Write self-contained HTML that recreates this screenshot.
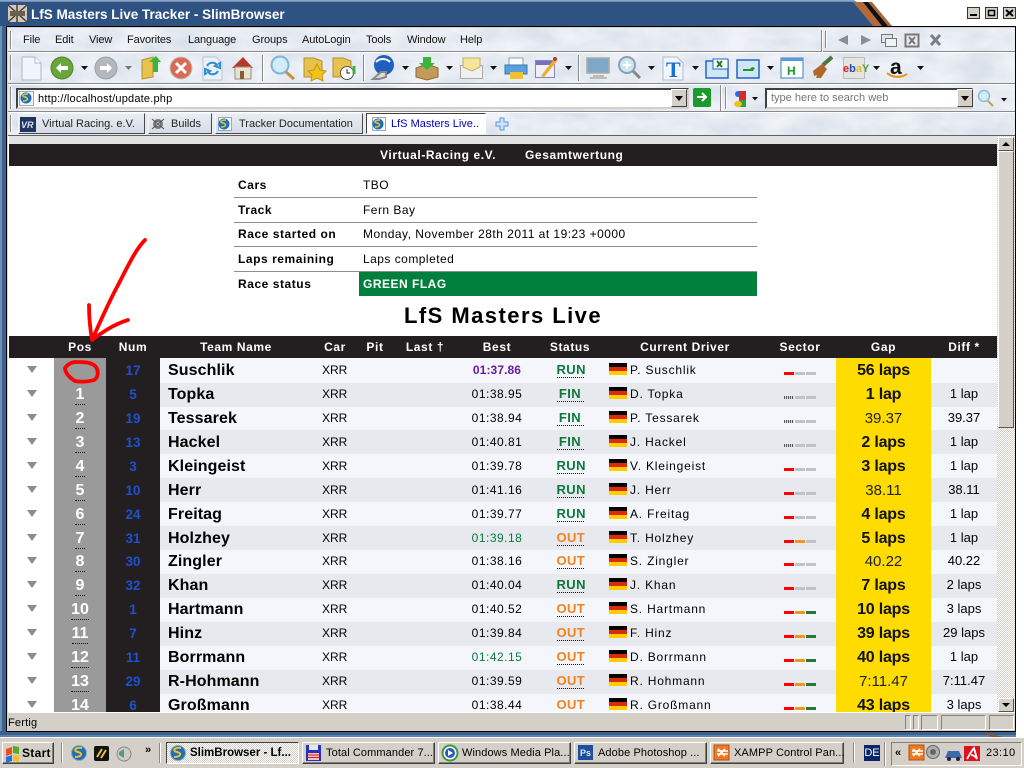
<!DOCTYPE html>
<html><head><meta charset="utf-8"><title>LfS Masters Live Tracker - SlimBrowser</title>
<style>
html,body{margin:0;padding:0;background:#fff}
body{position:relative;width:1024px;height:768px;overflow:hidden;font-family:"Liberation Sans",Arial,sans-serif;font-size:11px;color:#000}
div,span,i,b{position:absolute;white-space:nowrap;box-sizing:border-box}
.m{top:33px;letter-spacing:-.1px;line-height:14px;color:#111}
.ln{height:1px;background:#8e8e8e;left:234px;width:523px}
.il{left:238px;font:bold 12px "Liberation Sans",sans-serif;letter-spacing:.55px;line-height:16px}
.iv{left:363px;font:12px "Liberation Sans",sans-serif;letter-spacing:.47px;line-height:16px}
.h{top:336px;height:22px;line-height:23px;font:bold 12px/23px "Liberation Sans",sans-serif;letter-spacing:.6px;color:#fff;text-align:center}
.s{background:#e8e9ee;left:160px;width:676px}
.s2{background:#e8e9ee;left:931px;width:66px}
.r{left:0;width:997px;height:24px;line-height:24px}
.a{left:27px;top:8px;width:0;height:0;border:5px solid transparent;border-top:7px solid #8c8c8c;border-bottom:0}
.p{left:70px;top:1px;width:20px;text-align:center;color:#fff;font-size:16px;font-weight:bold;line-height:24px}
.p u{text-decoration:none;border-bottom:1px dotted #111;display:inline-block;line-height:17px;padding:0 0 1px 0;min-width:10px}
.n{left:106px;top:1px;width:54px;text-align:center;color:#1f50cf;font-weight:bold;font-size:13.5px}
.t{left:168px;top:1px;font-weight:bold;font-size:16px;letter-spacing:.1px}
.c{left:322px;font-size:12px}
.b{left:447px;width:100px;text-align:center;font-size:12px;letter-spacing:.5px}
.st{left:545px;width:50px;text-align:center;font-weight:bold;font-size:13px;letter-spacing:.4px}
.st u{text-decoration:none;border-bottom:1px dotted #111;display:inline-block;line-height:15px;width:27px}
.R{color:#0b7a3b}.O{color:#f5821f}
.f{left:609px;top:5px;width:18px;height:12px;background:linear-gradient(#000 0 33%,#dd2a0c 33% 66%,#fc0 66%)}
.d{left:630px;font-size:12px;letter-spacing:.8px}
.x1,.x2,.x3{top:14px;height:3px;width:10px;background:#c2c2c2}
.x1{left:784px}.x2{left:795px}.x3{left:806px}
.red{background:#f00}.org{background:#f39420}.grn{background:#1f7a3c}
.dot{background:repeating-linear-gradient(90deg,#555 0 1px,#ddd 1px 2px)}
.g{left:836px;top:1px;width:95px;text-align:center;font-size:15px;color:#222}
.g b{position:static;font-size:16px;color:#111;letter-spacing:-.2px}
.df{left:931px;width:66px;text-align:center;font-size:13px}
.w{height:22px;top:742px;background:#d4d0c8;border:1px solid;border-color:#fff #404040 #404040 #fff;box-shadow:inset -1px -1px 0 #808080}
.wt{top:747px;line-height:13px;font-size:11px;letter-spacing:.1px}
.tab{top:113px;height:21px;background:linear-gradient(#e8edf3,#d5dce6);border:1px solid;border-color:#f4f6fa #4a4a4a #4a4a4a #f4f6fa}
.tt{top:117px;font-size:11px;line-height:14px;color:#222}
.sepv{width:2px;background:linear-gradient(90deg,#8a8a8a 50%,#fff 50%)}
</style></head><body>

<!-- window frame -->
<div style="left:0;top:0;width:1024px;height:3px;background:linear-gradient(#9ab0cc,#4a6d9c);"></div>
<div style="left:0;top:2px;width:1024px;height:24px;background:#2e5281"></div>
<svg style="position:absolute;left:0;top:0" width="1024" height="768">
<defs>
<filter id="tx" x="0" y="0" width="100%" height="100%" color-interpolation-filters="sRGB"><feTurbulence type="fractalNoise" baseFrequency=".025 .05" numOctaves="3" seed="4"/><feColorMatrix values="0 0 0 0 .94  0 0 0 0 .95  0 0 0 0 .97  1.6 0 0 -.4 0"/><feComposite in2="SourceGraphic" operator="in"/><feMerge><feMergeNode in="SourceGraphic"/><feMergeNode/></feMerge></filter>
</defs>
<polygon points="854,0 1024,0 1024,27 892,27" fill="#fff"/>
<polygon points="853,2 866,2 888,26 873,26" fill="#b06a3b"/>
<polygon points="864,2 872,2 892,26 884,26" fill="#a8683c"/>
<polygon points="863,2 868,2 888,26 882,26" fill="#111"/>
<rect x="0" y="26" width="7" height="711" fill="#3b628f"/>
<rect x="0" y="26" width="2" height="711" fill="#6f8fb5"/>
<rect x="0" y="731" width="1016" height="6" fill="#3b628f"/>
<rect x="0" y="735" width="1016" height="2" fill="#5d83ad"/>
<polygon points="980,731 1003,737 992,737" fill="#8c5430"/>
<rect x="6.500" y="26.500" width="1009" height="705" fill="#d4d0c8" stroke="#000"/>
<rect x="8" y="28" width="1007" height="108" fill="#d9e1ec" filter="url(#tx)"/>
</svg>

<!-- toolbar dividers -->
<div style="left:8px;top:51px;width:1007px;height:1px;background:#8a8a8a"></div><div style="left:8px;top:52px;width:1007px;height:1px;background:#fff"></div>
<div style="left:8px;top:83px;width:1007px;height:1px;background:#8a8a8a"></div><div style="left:8px;top:84px;width:1007px;height:1px;background:#fff"></div>
<div style="left:8px;top:111px;width:1007px;height:1px;background:#8a8a8a"></div><div style="left:8px;top:112px;width:1007px;height:1px;background:#fff"></div>
<div style="left:8px;top:135px;width:1007px;height:1px;background:#606060"></div>
<div class="sepv" style="left:10px;top:31px;height:18px"></div>
<div class="sepv" style="left:10px;top:55px;height:25px"></div>
<div class="sepv" style="left:10px;top:87px;height:22px"></div>
<div class="sepv" style="left:10px;top:115px;height:17px"></div>
<div class="sepv" style="left:821px;top:30px;height:22px"></div>
<div class="sepv" style="left:825px;top:31px;height:17px"></div>
<div class="sepv" style="left:262px;top:55px;height:26px"></div>
<div class="sepv" style="left:363px;top:55px;height:26px"></div>
<div class="sepv" style="left:578px;top:55px;height:26px"></div>
<div class="sepv" style="left:720px;top:85px;height:26px"></div>
<div class="sepv" style="left:725px;top:87px;height:22px"></div>

<!-- title -->
<div style="left:31px;top:6px;font:bold 13.5px/17px 'Liberation Sans',sans-serif;color:#fff">LfS Masters Live Tracker - SlimBrowser</div>

<!-- menu -->
<div class="m" style="left:23px">File</div><div class="m" style="left:55px">Edit</div><div class="m" style="left:89px">View</div>
<div class="m" style="left:127px">Favorites</div><div class="m" style="left:188px">Language</div><div class="m" style="left:252px">Groups</div>
<div class="m" style="left:302px">AutoLogin</div><div class="m" style="left:366px">Tools</div><div class="m" style="left:407px">Window</div><div class="m" style="left:460px">Help</div>

<!-- address row -->
<div style="left:16px;top:88px;width:673px;height:21px;background:#fff;border:2px solid;border-color:#404040 #d4d0c8 #d4d0c8 #404040"></div>
<div style="left:38px;top:92px;font-size:11px;letter-spacing:.2px;line-height:14px">http://localhost/update.php</div>
<div style="left:671px;top:89px;width:16px;height:18px;background:#d4d0c8;border:1px solid;border-color:#fff #404040 #404040 #fff"></div>
<div style="left:693px;top:88px;width:18px;height:19px;background:#1d9a2e;border-radius:2px"></div>
<div style="left:765px;top:88px;width:208px;height:21px;background:#fff;border:2px solid;border-color:#404040 #d4d0c8 #d4d0c8 #404040"></div>
<div style="left:771px;top:91px;font-size:11px;line-height:14px;color:#777">type here to search web</div>
<div style="left:957px;top:89px;width:16px;height:18px;background:#d4d0c8;border:1px solid;border-color:#fff #404040 #404040 #fff"></div>

<!-- tabs -->
<div class="tab" style="left:18px;width:127px"></div><div class="tt" style="left:42px">Virtual Racing. e.V.</div>
<div class="tab" style="left:148px;width:64px"></div><div class="tt" style="left:171px">Builds</div>
<div class="tab" style="left:215px;width:148px"></div><div class="tt" style="left:239px">Tracker Documentation</div>
<div class="tab" style="left:366px;width:120px;background:#fff;border-color:#404040 #fff #fff #404040"></div><div class="tt" style="left:391px;color:#0000c0">LfS Masters Live..</div>

<!-- content -->
<div style="left:8px;top:136px;width:989px;height:576px;background:#fff"></div>
<div style="left:9px;top:136px;width:988px;height:8px;background:#e2e2e2"></div>
<div style="left:9px;top:144px;width:988px;height:22px;background:#231f20"></div>
<div style="left:380px;top:147px;font:bold 12px/16px 'Liberation Sans',sans-serif;letter-spacing:.6px;color:#fff">Virtual-Racing e.V.</div>
<div style="left:525px;top:147px;font:bold 12px/16px 'Liberation Sans',sans-serif;letter-spacing:.6px;color:#fff">Gesamtwertung</div>

<div class="il" style="top:177px">Cars</div><div class="iv" style="top:177px">TBO</div><div class="ln" style="top:197px"></div>
<div class="il" style="top:202px">Track</div><div class="iv" style="top:202px">Fern Bay</div><div class="ln" style="top:222px"></div>
<div class="il" style="top:226px">Race started on</div><div class="iv" style="top:226px">Monday, November 28th 2011 at 19:23 +0000</div><div class="ln" style="top:246px"></div>
<div class="il" style="top:251px">Laps remaining</div><div class="iv" style="top:251px">Laps completed</div><div class="ln" style="top:271px"></div>
<div style="left:359px;top:272px;width:398px;height:24px;background:#00803c"></div>
<div class="il" style="top:276px">Race status</div>
<div style="left:363px;top:276px;font:bold 12px/16px 'Liberation Sans',sans-serif;letter-spacing:.5px;color:#fff">GREEN FLAG</div>
<div style="left:404px;top:302px;font:bold 22px/28px 'Liberation Sans',sans-serif;letter-spacing:1.45px;color:#000">LfS Masters Live</div>

<!-- table head -->
<div style="left:9px;top:336px;width:988px;height:22px;background:#231f20"></div>
<div class="h" style="left:54px;width:52px">Pos</div><div class="h" style="left:106px;width:54px">Num</div>
<div class="h" style="left:160px;width:152px">Team Name</div><div class="h" style="left:312px;width:46px">Car</div>
<div class="h" style="left:360px;width:30px">Pit</div><div class="h" style="left:395px;width:60px">Last †</div>
<div class="h" style="left:467px;width:60px">Best</div><div class="h" style="left:540px;width:60px">Status</div>
<div class="h" style="left:625px;width:120px">Current Driver</div><div class="h" style="left:770px;width:60px">Sector</div>
<div class="h" style="left:836px;width:95px">Gap</div><div class="h" style="left:931px;width:66px">Diff *</div>

<!-- table body -->
<div style="left:0;top:358px;width:997px;height:354px;overflow:hidden">
<div style="left:54px;top:0;width:52px;height:354px;background:#9a9a9a"></div>
<div style="left:106px;top:0;width:54px;height:354px;background:#231f20"></div>
<div style="left:160px;top:0;width:676px;height:354px;background:#f4f6fb"></div>
<div style="left:931px;top:0;width:66px;height:354px;background:#f4f6fb"></div>
<div style="left:836px;top:0;width:95px;height:354px;background:#ffdc00"></div>
<div class="s" style="top:25px;height:24px"></div><div class="s2" style="top:25px;height:24px"></div>
<div class="s" style="top:72px;height:24px"></div><div class="s2" style="top:72px;height:24px"></div>
<div class="s" style="top:120px;height:24px"></div><div class="s2" style="top:120px;height:24px"></div>
<div class="s" style="top:168px;height:24px"></div><div class="s2" style="top:168px;height:24px"></div>
<div class="s" style="top:216px;height:24px"></div><div class="s2" style="top:216px;height:24px"></div>
<div class="s" style="top:264px;height:24px"></div><div class="s2" style="top:264px;height:24px"></div>
<div class="s" style="top:312px;height:24px"></div><div class="s2" style="top:312px;height:24px"></div>

<div class="r" style="top:0"><i class="a"></i><span class="n">17</span><span class="t">Suschlik</span><span class="c">XRR</span><span class="b" style="color:#6a1b9a;font-weight:bold;letter-spacing:.1px">01:37.86</span><span class="st R"><u>RUN</u></span><i class="f"></i><span class="d">P. Suschlik</span><i class="x1 red"></i><i class="x2"></i><i class="x3"></i><span class="g"><b>56 laps</b></span></div>
<div class="r" style="top:24px"><i class="a"></i><span class="p"><u>1</u></span><span class="n">5</span><span class="t">Topka</span><span class="c">XRR</span><span class="b">01:38.95</span><span class="st R"><u>FIN</u></span><i class="f"></i><span class="d">D. Topka</span><i class="x1 dot"></i><i class="x2"></i><i class="x3"></i><span class="g"><b>1 lap</b></span><span class="df">1 lap</span></div>
<div class="r" style="top:48px"><i class="a"></i><span class="p"><u>2</u></span><span class="n">19</span><span class="t">Tessarek</span><span class="c">XRR</span><span class="b">01:38.94</span><span class="st R"><u>FIN</u></span><i class="f"></i><span class="d">P. Tessarek</span><i class="x1 dot"></i><i class="x2"></i><i class="x3"></i><span class="g">39.37</span><span class="df">39.37</span></div>
<div class="r" style="top:72px"><i class="a"></i><span class="p"><u>3</u></span><span class="n">13</span><span class="t">Hackel</span><span class="c">XRR</span><span class="b">01:40.81</span><span class="st R"><u>FIN</u></span><i class="f"></i><span class="d">J. Hackel</span><i class="x1 dot"></i><i class="x2"></i><i class="x3"></i><span class="g"><b>2 laps</b></span><span class="df">1 lap</span></div>
<div class="r" style="top:96px"><i class="a"></i><span class="p"><u>4</u></span><span class="n">3</span><span class="t">Kleingeist</span><span class="c">XRR</span><span class="b">01:39.78</span><span class="st R"><u>RUN</u></span><i class="f"></i><span class="d">V. Kleingeist</span><i class="x1 red"></i><i class="x2"></i><i class="x3"></i><span class="g"><b>3 laps</b></span><span class="df">1 lap</span></div>
<div class="r" style="top:120px"><i class="a"></i><span class="p"><u>5</u></span><span class="n">10</span><span class="t">Herr</span><span class="c">XRR</span><span class="b">01:41.16</span><span class="st R"><u>RUN</u></span><i class="f"></i><span class="d">J. Herr</span><i class="x1 red"></i><i class="x2"></i><i class="x3"></i><span class="g">38.11</span><span class="df">38.11</span></div>
<div class="r" style="top:144px"><i class="a"></i><span class="p"><u>6</u></span><span class="n">24</span><span class="t">Freitag</span><span class="c">XRR</span><span class="b">01:39.77</span><span class="st R"><u>RUN</u></span><i class="f"></i><span class="d">A. Freitag</span><i class="x1 red"></i><i class="x2"></i><i class="x3"></i><span class="g"><b>4 laps</b></span><span class="df">1 lap</span></div>
<div class="r" style="top:168px"><i class="a"></i><span class="p"><u>7</u></span><span class="n">31</span><span class="t">Holzhey</span><span class="c">XRR</span><span class="b" style="color:#0b7a3b">01:39.18</span><span class="st O"><u>OUT</u></span><i class="f"></i><span class="d">T. Holzhey</span><i class="x1 red"></i><i class="x2 org"></i><i class="x3"></i><span class="g"><b>5 laps</b></span><span class="df">1 lap</span></div>
<div class="r" style="top:191px"><i class="a"></i><span class="p"><u>8</u></span><span class="n">30</span><span class="t">Zingler</span><span class="c">XRR</span><span class="b">01:38.16</span><span class="st O"><u>OUT</u></span><i class="f"></i><span class="d">S. Zingler</span><i class="x1 red"></i><i class="x2"></i><i class="x3"></i><span class="g">40.22</span><span class="df">40.22</span></div>
<div class="r" style="top:215px"><i class="a"></i><span class="p"><u>9</u></span><span class="n">32</span><span class="t">Khan</span><span class="c">XRR</span><span class="b">01:40.04</span><span class="st R"><u>RUN</u></span><i class="f"></i><span class="d">J. Khan</span><i class="x1 red"></i><i class="x2"></i><i class="x3"></i><span class="g"><b>7 laps</b></span><span class="df">2 laps</span></div>
<div class="r" style="top:239px"><i class="a"></i><span class="p"><u>10</u></span><span class="n">1</span><span class="t">Hartmann</span><span class="c">XRR</span><span class="b">01:40.52</span><span class="st O"><u>OUT</u></span><i class="f"></i><span class="d">S. Hartmann</span><i class="x1 red"></i><i class="x2 org"></i><i class="x3 grn"></i><span class="g"><b>10 laps</b></span><span class="df">3 laps</span></div>
<div class="r" style="top:263px"><i class="a"></i><span class="p"><u>11</u></span><span class="n">7</span><span class="t">Hinz</span><span class="c">XRR</span><span class="b">01:39.84</span><span class="st O"><u>OUT</u></span><i class="f"></i><span class="d">F. Hinz</span><i class="x1 red"></i><i class="x2 org"></i><i class="x3 grn"></i><span class="g"><b>39 laps</b></span><span class="df">29 laps</span></div>
<div class="r" style="top:287px"><i class="a"></i><span class="p"><u>12</u></span><span class="n">11</span><span class="t">Borrmann</span><span class="c">XRR</span><span class="b" style="color:#0b7a3b">01:42.15</span><span class="st O"><u>OUT</u></span><i class="f"></i><span class="d">D. Borrmann</span><i class="x1 red"></i><i class="x2 org"></i><i class="x3 grn"></i><span class="g"><b>40 laps</b></span><span class="df">1 lap</span></div>
<div class="r" style="top:311px"><i class="a"></i><span class="p"><u>13</u></span><span class="n">29</span><span class="t">R-Hohmann</span><span class="c">XRR</span><span class="b">01:39.59</span><span class="st O"><u>OUT</u></span><i class="f"></i><span class="d">R. Hohmann</span><i class="x1 red"></i><i class="x2 org"></i><i class="x3 grn"></i><span class="g">7:11.47</span><span class="df">7:11.47</span></div>
<div class="r" style="top:335px"><i class="a"></i><span class="p"><u>14</u></span><span class="n">6</span><span class="t">Großmann</span><span class="c">XRR</span><span class="b">01:38.44</span><span class="st O"><u>OUT</u></span><i class="f"></i><span class="d">R. Großmann</span><i class="x1 red"></i><i class="x2 org"></i><i class="x3 grn"></i><span class="g"><b>43 laps</b></span><span class="df">3 laps</span></div>
</div>

<!-- scrollbar -->
<div style="left:997px;top:136px;width:18px;height:576px;background:repeating-conic-gradient(#fff 0 25%,#d4d0c8 0 50%) 0 0/2px 2px"></div>
<div style="left:998px;top:137px;width:16px;height:14px;background:#d4d0c8;border:1px solid;border-color:#fff #555 #555 #fff"></div>
<div style="left:998px;top:151px;width:16px;height:277px;background:#d4d0c8;border:1px solid;border-color:#fff #555 #555 #fff"></div>
<div style="left:998px;top:698px;width:16px;height:14px;background:#d4d0c8;border:1px solid;border-color:#fff #555 #555 #fff"></div>

<!-- status bar -->
<div style="left:8px;top:712px;width:1007px;height:19px;background:#d4d0c8;border-top:1px solid #fff"></div>
<div style="left:8px;top:716px;font-size:11px;line-height:14px;letter-spacing:.2px">Fertig</div>
<div style="left:905px;top:715px;width:6px;height:15px;border:1px solid;border-color:#808080 #fff #fff #808080"></div>
<div style="left:913px;top:715px;width:6px;height:15px;border:1px solid;border-color:#808080 #fff #fff #808080"></div>
<div style="left:921px;top:715px;width:17px;height:15px;border:1px solid;border-color:#808080 #fff #fff #808080"></div>
<div style="left:941px;top:715px;width:45px;height:15px;border:1px solid;border-color:#808080 #fff #fff #808080"></div>
<div style="left:989px;top:715px;width:25px;height:15px;border:1px solid;border-color:#808080 #fff #fff #808080"></div>

<!-- taskbar -->
<div style="left:0;top:737px;width:1024px;height:31px;background:#d4d0c8;border-top:1px solid #fff"></div>
<div class="w" style="left:2px;width:52px"></div><div class="wt" style="left:22px;font-weight:bold;font-size:12px;letter-spacing:.3px">Start</div>
<div class="sepv" style="left:61px;top:743px;height:20px"></div>
<div style="left:145px;top:744px;font:bold 11px/13px 'Liberation Sans',sans-serif">»</div>
<div class="sepv" style="left:159px;top:743px;height:20px"></div>
<div class="w" style="left:166px;width:133px;border-color:#404040 #fff #fff #404040;box-shadow:none;background:repeating-conic-gradient(#fff 0 25%,#d4d0c8 0 50%) 0 0/2px 2px"></div>
<div class="wt" style="left:190px;font-weight:bold;letter-spacing:0;font-size:11.5px">SlimBrowser - Lf...</div>
<div class="w" style="left:302px;width:133px"></div><div class="wt" style="left:326px">Total Commander 7...</div>
<div class="w" style="left:438px;width:133px"></div><div class="wt" style="left:462px">Windows Media Pla...</div>
<div class="w" style="left:574px;width:133px"></div><div class="wt" style="left:598px">Adobe Photoshop ...</div>
<div class="w" style="left:710px;width:134px"></div><div class="wt" style="left:734px">XAMPP Control Pan...</div>
<div class="sepv" style="left:853px;top:743px;height:20px"></div>
<div style="left:864px;top:745px;width:16px;height:16px;background:#0a246a;color:#fff;font-size:11px;line-height:16px;text-align:center">DE</div>
<div class="sepv" style="left:884px;top:742px;height:24px"></div>
<div style="left:891px;top:742px;width:131px;height:24px;border:1px solid;border-color:#808080 #fff #fff #808080"></div>
<div style="left:895px;top:746px;font:bold 11px/14px 'Liberation Sans',sans-serif">«</div>
<div style="left:986px;top:746px;font-size:11px;letter-spacing:.4px;line-height:14px">23:10</div>

<!-- icons overlay -->
<svg style="position:absolute;left:0;top:0" width="1024" height="768" fill="none">
<!-- window buttons -->
<g stroke-width="1"><rect x="967.500" y="7.500" width="12" height="11" fill="#d4d0c8" stroke="#333"/><rect x="985.500" y="7.500" width="12" height="11" fill="#d4d0c8" stroke="#333"/><rect x="1003.500" y="7.500" width="12" height="11" fill="#d4d0c8" stroke="#333"/></g>
<rect x="970" y="14" width="7" height="2" fill="#000"/><rect x="988.500" y="10.500" width="6" height="5" stroke="#000" stroke-width="1.500"/><path d="M1006 10l7 6M1013 10l-7 6" stroke="#000" stroke-width="2"/>
<!-- app icon -->
<rect x="8" y="5" width="19" height="17" fill="#cfc9bd"/><path d="M8 5l19 17M27 5L8 22M17 4v19" stroke="#4a4030" stroke-width="1.500"/><rect x="10" y="11" width="15" height="5" fill="#6b5f4e"/>
<!-- menu right icons -->
<path d="M848 35v10l-10-5z" fill="#8a8d92"/><path d="M861 35v10l10-5z" fill="#8a8d92"/>
<rect x="881.500" y="34.500" width="11" height="8" stroke="#777" fill="#dde4ee"/><rect x="885.500" y="38.500" width="11" height="8" stroke="#777" fill="#eef2f7"/>
<rect x="905.500" y="34.500" width="13" height="12" stroke="#777" stroke-width="2"/><path d="M909 37l6 7M915 37l-6 7" stroke="#777" stroke-width="2"/><path d="M931 35l9 10M940 35l-9 10" stroke="#7b7f84" stroke-width="3"/>
<!-- new doc -->
<path d="M22 57h13l6 6v17H22z" fill="#f0f5fb" stroke="#a9b9c9"/><path d="M35 57v6h6" stroke="#a9b9c9" fill="#fff"/>
<!-- back / fwd -->
<circle cx="62" cy="68" r="11" fill="#6aa63c" stroke="#4e8528"/><path d="M56 68l5-5v3h7v4h-7v3z" fill="#fff"/><path d="M81 66h7l-3.500 4z" fill="#111"/>
<circle cx="106" cy="68" r="11" fill="#b4b8bc" stroke="#9ca0a4"/><path d="M112 68l-5-5v3h-7v4h7v3z" fill="#fff"/><path d="M125 66h7l-3.500 4z" fill="#777"/>
<!-- up folder -->
<path d="M142 60l11-3v20l-11 2z" fill="#e8c24e" stroke="#b59030"/><path d="M153 62l-4 0 7-6 5 6h-3v10h-5z" fill="#3bb43a"/>
<!-- stop -->
<circle cx="181" cy="68" r="11" fill="#d96a54" stroke="#c2c2c2"/><path d="M176 63l10 10M186 63l-10 10" stroke="#fff" stroke-width="3"/>
<!-- refresh -->
<path d="M203 57h13l6 6v17h-19z" fill="#eaf1f8" stroke="#b8c6d4"/><path d="M207 66a6 6 0 0 1 10-1l-2 1 5 2 0-5-2 1M218 71a6 6 0 0 1-10 1l2-1-5-2 0 5 2-1" stroke="#2f8fd0" stroke-width="2"/>
<!-- home -->
<path d="M232 68l11-11 10 11" fill="#b5382a"/><path d="M235 67h16v12h-16z" fill="#e8e2d4" stroke="#9a8f7a"/><rect x="240" y="71" width="4" height="8" fill="#8a5a30"/>
<!-- magnify -->
<circle cx="280" cy="65" r="8.500" fill="#d3ecfa" stroke="#7eb5d6" stroke-width="2"/><path d="M286 72l8 7" stroke="#c8923c" stroke-width="3"/>
<!-- favorites -->
<path d="M304 58h10l8 3v16h-18z" fill="#e8c24e" stroke="#b59030"/><path d="M317 64l3 6 6 1-4 4 1 6-6-3-6 3 1-6-4-4 6-1z" fill="#f3c318" stroke="#c3931a"/>
<!-- history -->
<path d="M333 58h10l8 3v16h-18z" fill="#e8c24e" stroke="#b59030"/><circle cx="347" cy="73" r="6.500" fill="#fff" stroke="#555"/><path d="M347 69v4h3" stroke="#222"/><path d="M354 66v8" stroke="#3bb43a" stroke-width="3"/>
<!-- globe -->
<circle cx="384" cy="65" r="10" fill="#1f5fc0"/><path d="M376 62c4-4 10-4 14 0" stroke="#fff" stroke-width="2"/><path d="M373 79l8-7h5v5l-7 2z" stroke="#888" stroke-width="2" fill="#ddd"/><path d="M402 66h7l-3.500 4z" fill="#111"/>
<!-- download -->
<path d="M416 68l11-4 11 4v9l-11 3-11-3z" fill="#c49a5c" stroke="#8a6a30"/><path d="M423 57h8v6h4l-8 7-8-7h4z" fill="#3bb43a"/><path d="M446 66h7l-3.500 4z" fill="#111"/>
<!-- mail -->
<rect x="460.500" y="65.500" width="22" height="13" fill="#eef0f2" stroke="#aaa"/><path d="M463 58h17v9l-8 4-9-4z" fill="#f6e59a" stroke="#c4b060"/><path d="M490 66h7l-3.500 4z" fill="#111"/>
<!-- printer -->
<rect x="509" y="58" width="14" height="8" fill="#fff" stroke="#8aa"/><rect x="505" y="65" width="22" height="9" fill="#5aa0dc" stroke="#3a78b0"/><rect x="510" y="72" width="13" height="7" fill="#f4c030"/>
<!-- edit -->
<rect x="535.500" y="60.500" width="19" height="17" fill="#eef0f8" stroke="#8888b0"/><rect x="536" y="61" width="18" height="4" fill="#7a6cc0"/><path d="M541 76l13-17 3 2-13 16z" fill="#e8b020"/><circle cx="555" cy="59" r="2" fill="#c03030"/><path d="M565 66h7l-3.500 4z" fill="#111"/>
<!-- monitor -->
<rect x="587" y="58" width="22" height="15" fill="#7ea7c8" stroke="#aaa" stroke-width="1.500"/><path d="M593 76h11M590 78h17" stroke="#bbb" stroke-width="2"/>
<!-- zoom -->
<circle cx="627" cy="65" r="8" fill="#cfe4f4" stroke="#8aa0b0" stroke-width="2"/><path d="M623 65h8M627 61v8" stroke="#fff" stroke-width="2"/><path d="M633 71l7 7" stroke="#888" stroke-width="3"/><path d="M648 66h7l-3.500 4z" fill="#111"/>
<!-- T -->
<path d="M663 57h14l6 6v17h-20z" fill="#f2f6fb" stroke="#aebccb"/><text x="666" y="77" font-family="Liberation Serif" font-size="22" font-weight="bold" fill="#1a70d8">T</text><path d="M692 66h7l-3.500 4z" fill="#111"/>
<!-- window x -->
<rect x="706" y="61" width="22" height="17" fill="#cfe6f6" stroke="#2464c8" stroke-width="1.500"/><rect x="713" y="59" width="15" height="10" fill="#fff" stroke="#2464c8"/><path d="M717 61l5 6M722 61l-5 6" stroke="#1a7a2a" stroke-width="2"/>
<!-- window green -->
<rect x="737" y="60" width="22" height="18" fill="#cfe6f6" stroke="#2464c8" stroke-width="1.500"/><path d="M743 69h7l2-2 3 1-2 3h-10z" fill="#1a9a2a"/><path d="M767 66h7l-3.500 4z" fill="#111"/>
<!-- H -->
<rect x="781" y="58" width="22" height="20" fill="#fff" stroke="#3a80c0"/><rect x="781" y="58" width="22" height="3" fill="#5a9ad8"/><text x="787" y="75" font-family="Liberation Sans" font-size="12" font-weight="bold" fill="#1a9a2a">H</text>
<!-- broom -->
<path d="M823 65l9-8" stroke="#4a7a40" stroke-width="4"/><path d="M813 71l9-7 5 5-6 9-5 0 1-3-3 1z" fill="#b0682a"/>
<!-- ebay -->
<rect x="843.500" y="57.500" width="21" height="21" fill="#e4e4e0" stroke="#bbb"/><text x="843" y="72" font-family="Liberation Sans" font-size="11" font-weight="bold" fill="#e02020">e<tspan fill="#1a4fc0">b</tspan><tspan fill="#e0c020">a</tspan><tspan fill="#60a030">Y</tspan></text><path d="M873 66h7l-3.500 4z" fill="#111"/>
<!-- amazon -->
<text x="890" y="74" font-family="Liberation Sans" font-size="21" font-weight="bold" fill="#111">a</text><path d="M887 73c6 5 14 5 20 1" stroke="#f09010" stroke-width="2"/><path d="M917 66h7l-3.500 4z" fill="#111"/>
<!-- address -->
<rect x="19.500" y="91.500" width="14" height="14" fill="#f4f6fa" stroke="#9ab"/><circle cx="26" cy="98" r="5.500" fill="#1d70b8"/><path d="M23 101c5 0 6-3 2-4s-2-3 3-3" stroke="#f0c030" stroke-width="1.500"/>
<path d="M675 96h8l-4 5z" fill="#000"/>
<path d="M697 97h8M702 93l4 4-4 4" stroke="#fff" stroke-width="2"/>
<path d="M961 96h8l-4 5z" fill="#000"/>
<!-- google -->
<circle cx="738" cy="94" r="3" fill="#2a6adc"/><rect x="739" y="91" width="7" height="9" fill="#d92a2a"/><rect x="739" y="100" width="7" height="7" fill="#2ea32e"/><ellipse cx="738" cy="104" rx="4" ry="3" fill="#f4c020"/><path d="M752 97h6l-3 3.500z" fill="#111"/>
<!-- search -->
<circle cx="984" cy="96" r="5.500" fill="#d3ecfa" stroke="#8abbd8" stroke-width="1.500"/><path d="M988 101l5 5" stroke="#c8a050" stroke-width="2"/><path d="M1001 98h6l-3 3.500z" fill="#111"/>
<!-- tabs -->
<rect x="20" y="117" width="16" height="15" fill="#1f3560"/><text x="21" y="128" font-family="Liberation Sans" font-size="9" font-weight="bold" font-style="italic" fill="#dfe6f0">VR</text>
<circle cx="158" cy="124" r="5" fill="#777"/><circle cx="158" cy="124" r="2" fill="#ddd"/><path d="M152 119l12 10M164 119l-12 10" stroke="#555"/>
<rect x="218.500" y="117.500" width="13" height="13" fill="#f4f6fa" stroke="#9ab"/><circle cx="224" cy="124" r="5.500" fill="#1d70b8"/><path d="M221 127c5 0 6-3 2-4s-2-3 3-3" stroke="#f0c030" stroke-width="1.500"/>
<rect x="372.500" y="117.500" width="13" height="13" fill="#f4f6fa" stroke="#9ab"/><circle cx="378" cy="124" r="5.500" fill="#1d70b8"/><path d="M375 127c5 0 6-3 2-4s-2-3 3-3" stroke="#f0c030" stroke-width="1.500"/>
<path d="M500 118h4v4h4v4h-4v4h-4v-4h-4v-4h4z" fill="#cfe2fa" stroke="#5b9ae0"/>
<!-- scroll arrows -->
<path d="M1002 146h8l-4-4z" fill="#000"/><path d="M1002 703h8l-4 4z" fill="#000"/>
<!-- red annotation -->
<path d="M145 240C135 250 127 268 117 287C110 300 100 322 92 340C90 328 89 316 89 305M92 340C100 334 112 325 128 320" stroke="#f00" stroke-width="3.800" stroke-linecap="round" stroke-linejoin="round"/>
<path d="M65 368C68 364 72 362 76 362C84 362 92 362 96 367C99 372 98 378 94 380C88 382 80 382 75 381C70 378 65 373 65 368Z" stroke="#f00" stroke-width="3.800"/>
<!-- taskbar icons -->
<path d="M6 749l6-2v7l-6 2z" fill="#e8501c"/><path d="M13 746l6 1v7l-6-1z" fill="#5aa820"/><path d="M6 757l6-2v6l-6 2z" fill="#2a70d8"/><path d="M13 755l6 1v6l-6-1z" fill="#f0c020"/>
<circle cx="79" cy="753" r="7.500" fill="#1d70b8" stroke="#8ab"/><path d="M75 757c7 0 8-4 3-5s-3-5 4-4" stroke="#f0c030" stroke-width="2"/>
<rect x="94" y="746" width="15" height="15" rx="2" fill="#111"/><path d="M97 757l5-8M101 758l5-8" stroke="#e8c040" stroke-width="2"/>
<circle cx="124" cy="754" r="7" fill="#ccc" stroke="#888"/><path d="M119 752l5-3v9l-5-3z" fill="#5a9a70"/>
<circle cx="178" cy="753" r="7.500" fill="#1d70b8" stroke="#8ab"/><path d="M174 757c7 0 8-4 3-5s-3-5 4-4" stroke="#f0c030" stroke-width="2"/>
<rect x="306" y="745" width="15" height="16" fill="#2430c0"/><rect x="309" y="745" width="9" height="5" fill="#e8e8f0"/><rect x="308" y="753" width="11" height="7" fill="#f4c0c0"/><path d="M308 755h11M308 757.500h11" stroke="#d02020"/>
<circle cx="450" cy="753" r="7.500" fill="#fff" stroke="#3a9a3a" stroke-width="2"/><circle cx="450" cy="753" r="5" fill="#2a58c0"/><path d="M448 750l5 3-5 3z" fill="#fff"/>
<rect x="578" y="745" width="15" height="15" fill="#1f4f9a"/><text x="580" y="756" font-family="Liberation Sans" font-size="9" font-weight="bold" fill="#dfe8f8">Ps</text>
<rect x="714" y="745" width="15" height="15" fill="#f07820" stroke="#b05010"/><path d="M718 749c4 3 4 4 0 7M725 749c-4 3-4 4 0 7M717 751h11M717 754h11" stroke="#fff" stroke-width="1.500"/>
<rect x="909" y="745" width="15" height="15" fill="#f07820" stroke="#b05010"/><path d="M913 749c4 3 4 4 0 7M920 749c-4 3-4 4 0 7M912 751h11M912 754h11" stroke="#fff" stroke-width="1.500"/>
<circle cx="933" cy="752" r="6.500" fill="#b0b0b0" stroke="#666"/><circle cx="933" cy="752" r="3" fill="#666"/>
<path d="M945 758l3-7h11l3 7z" fill="#3a6aa8"/><circle cx="949" cy="759" r="2" fill="#224"/><circle cx="958" cy="759" r="2" fill="#224"/>
<rect x="964" y="746" width="16" height="15" fill="#e01020"/><path d="M967 759c3-5 5-9 7-11l3 11c-2-3-4-4-6-4" stroke="#fff" stroke-width="1.800"/>
</svg>
</body></html>
